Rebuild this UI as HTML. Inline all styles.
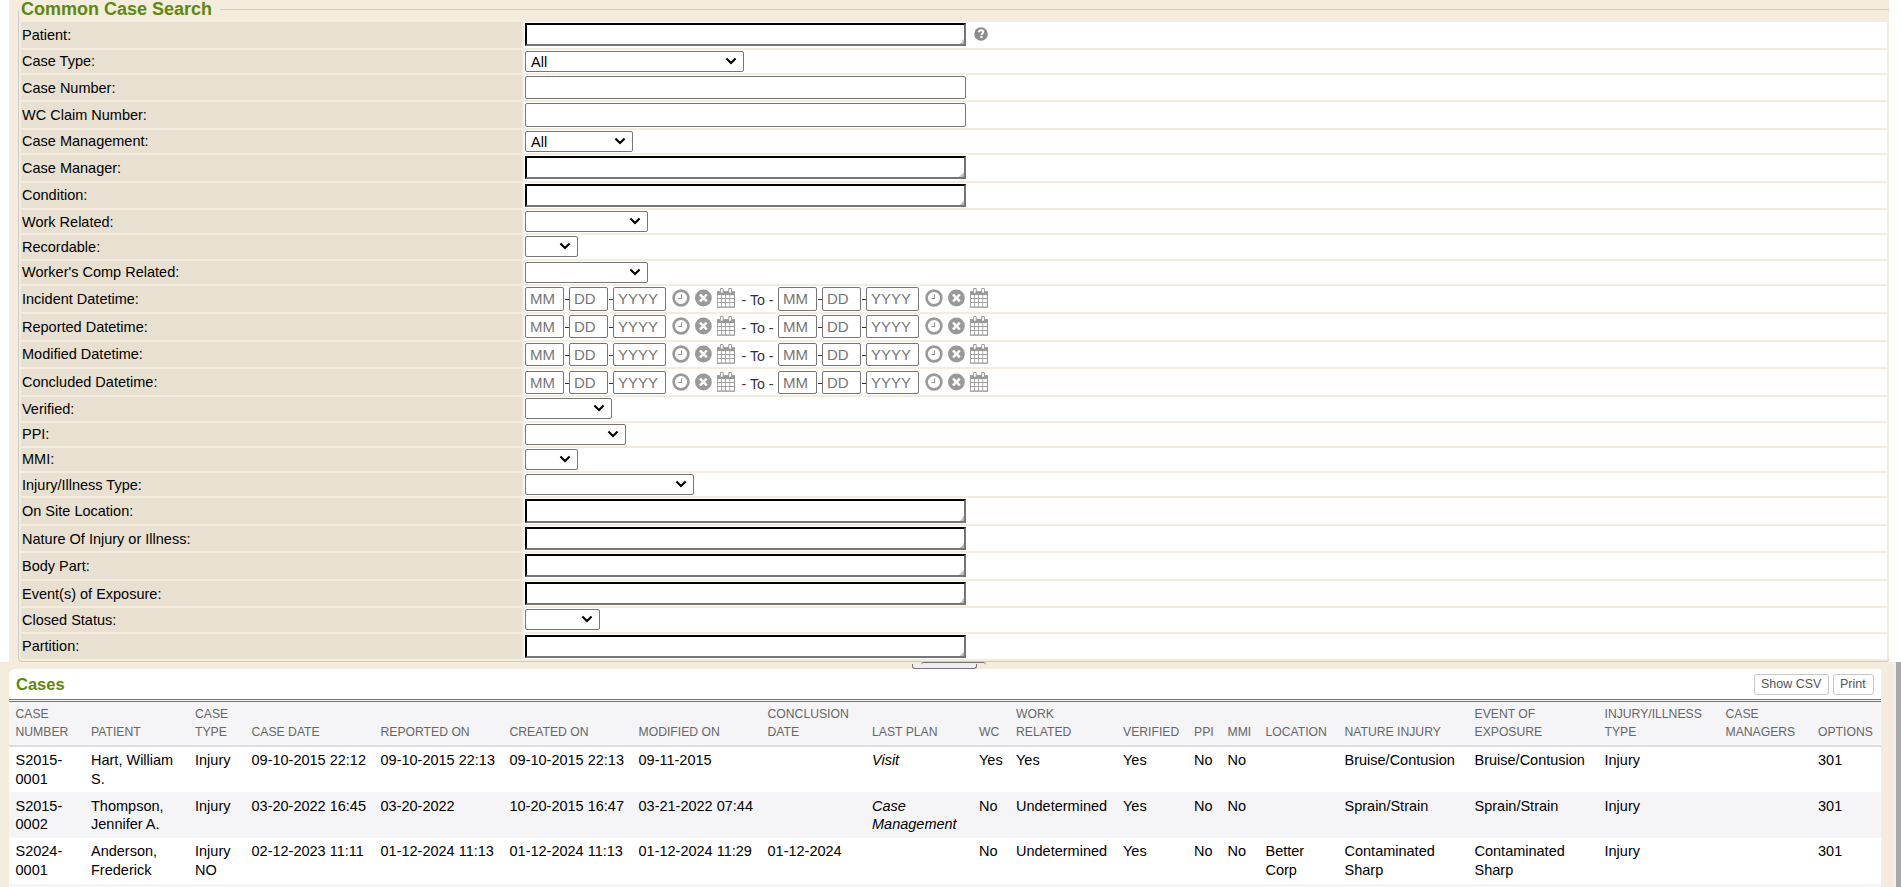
<!DOCTYPE html>
<html><head><meta charset="utf-8"><title>Common Case Search</title>
<style>
*{box-sizing:border-box}
html,body{margin:0;padding:0;width:1901px;height:887px;overflow:hidden;background:#fff;font-family:"Liberation Sans", sans-serif;}
.a{position:absolute}
.lbl{position:absolute;left:21px;width:501px;background:#e8e1d2;font-size:14.5px;color:#000;padding-left:1px;white-space:nowrap}
.dat{position:absolute;left:524px;width:1363px;background:#fff}
.ta{position:absolute;left:525px;width:441px;border-style:solid;border-width:2px;border-color:#000 #767676 #767676 #000;background:#fff}
.ta:after{content:"";position:absolute;right:0;bottom:0;width:5px;height:5px;background:linear-gradient(135deg,transparent 50%,#d4d4d4 50%,#a8a8a8 100%)}
.inp{position:absolute;border:1px solid #767676;border-radius:2px;background:#fff}
.sel{position:absolute;left:525px;height:21px;border:1px solid #767676;border-radius:2px;background:#fff;font-size:14.5px;color:#000}
.sel svg{position:absolute;top:5px}
.ph{position:absolute;font-size:15px;color:#757575;white-space:nowrap}
.dash{position:absolute;width:4px;height:1px;background:#333}
.txt{position:absolute;white-space:nowrap}
.th{position:absolute;font-size:12.2px;color:#666;line-height:18px;white-space:nowrap}
.td{position:absolute;font-size:14.5px;color:#000;line-height:18.7px;white-space:nowrap}
</style></head><body>

<div class="a" style="left:9px;top:0;width:1880px;height:662px;background:#f4ecdc"></div>
<div class="a" style="left:0;top:662px;width:1894px;height:225px;background:#f4ecdc"></div>
<div class="a" style="left:1894px;top:662px;width:2px;height:225px;background:#f0f0f0"></div>
<div class="a" style="left:1896px;top:662px;width:5px;height:225px;background:#a8a8a8"></div>
<div class="a" style="left:18px;top:9px;width:1871px;height:653px;border:1px solid #cbcbcb;border-right:none;border-radius:4px 0 4px 4px"></div>
<div class="a" style="left:1886px;top:9px;width:3px;height:653px;border-top:1px solid #cbcbcb;border-bottom:1px solid #cbcbcb;border-radius:0 3px 3px 0"></div>
<div class="a" style="left:19px;top:0;width:201px;height:20px;background:#f4ecdc"></div>
<div class="txt" style="left:21px;top:-1px;font-size:18px;font-weight:bold;color:#5b8a0c;line-height:20px">Common Case Search</div>
<div class="lbl" style="top:22px;height:26px;line-height:26px"><span style="position:relative;top:0px">Patient:</span></div>
<div class="dat" style="top:22px;height:26px"></div>
<div class="ta" style="top:23px;height:23px"></div>
<svg class="a" style="left:974px;top:27px" width="14" height="14" viewBox="0 0 14 14"><circle cx="7" cy="7" r="6.8" fill="#8c8c8c"/><path d="M4.9 5.3 C4.9 3.9 5.9 3.2 7.1 3.2 C8.4 3.2 9.3 4 9.3 5.1 C9.3 6.5 7.6 6.6 7.6 7.9" fill="none" stroke="#fff" stroke-width="1.9"/><rect x="6.3" y="9" width="2.2" height="2" fill="#fff"/></svg>
<div class="lbl" style="top:50px;height:23px;line-height:23px"><span style="position:relative;top:0px">Case Type:</span></div>
<div class="dat" style="top:50px;height:23px"></div>
<div class="sel" style="top:51px;width:219px"><span class="txt" style="left:5px;top:1px;line-height:18px">All</span><svg style="left:199px" width="12" height="8" viewBox="0 0 12 8"><path d="M1.4 1.6 L6 6 L10.6 1.6" fill="none" stroke="#000" stroke-width="2.1"/></svg></div>
<div class="lbl" style="top:75px;height:25px;line-height:25px"><span style="position:relative;top:1px">Case Number:</span></div>
<div class="dat" style="top:75px;height:25px"></div>
<div class="inp" style="left:525px;top:76px;width:441px;height:23px"></div>
<div class="lbl" style="top:102px;height:26px;line-height:26px"><span style="position:relative;top:0px">WC Claim Number:</span></div>
<div class="dat" style="top:102px;height:26px"></div>
<div class="inp" style="left:525px;top:103px;width:441px;height:24px"></div>
<div class="lbl" style="top:130px;height:23px;line-height:23px"><span style="position:relative;top:0px">Case Management:</span></div>
<div class="dat" style="top:130px;height:23px"></div>
<div class="sel" style="top:131px;width:108px"><span class="txt" style="left:5px;top:1px;line-height:18px">All</span><svg style="left:88px" width="12" height="8" viewBox="0 0 12 8"><path d="M1.4 1.6 L6 6 L10.6 1.6" fill="none" stroke="#000" stroke-width="2.1"/></svg></div>
<div class="lbl" style="top:155px;height:26px;line-height:26px"><span style="position:relative;top:0px">Case Manager:</span></div>
<div class="dat" style="top:155px;height:26px"></div>
<div class="ta" style="top:156px;height:23px"></div>
<div class="lbl" style="top:183px;height:25px;line-height:25px"><span style="position:relative;top:0px">Condition:</span></div>
<div class="dat" style="top:183px;height:25px"></div>
<div class="ta" style="top:184px;height:23px"></div>
<div class="lbl" style="top:210px;height:23px;line-height:23px"><span style="position:relative;top:1px">Work Related:</span></div>
<div class="dat" style="top:210px;height:23px"></div>
<div class="sel" style="top:211px;width:123px"><span class="txt" style="left:5px;top:1px;line-height:18px"></span><svg style="left:103px" width="12" height="8" viewBox="0 0 12 8"><path d="M1.4 1.6 L6 6 L10.6 1.6" fill="none" stroke="#000" stroke-width="2.1"/></svg></div>
<div class="lbl" style="top:235px;height:24px;line-height:24px"><span style="position:relative;top:0px">Recordable:</span></div>
<div class="dat" style="top:235px;height:24px"></div>
<div class="sel" style="top:236px;width:53px"><span class="txt" style="left:5px;top:1px;line-height:18px"></span><svg style="left:33px" width="12" height="8" viewBox="0 0 12 8"><path d="M1.4 1.6 L6 6 L10.6 1.6" fill="none" stroke="#000" stroke-width="2.1"/></svg></div>
<div class="lbl" style="top:261px;height:23px;line-height:23px"><span style="position:relative;top:0px">Worker's Comp Related:</span></div>
<div class="dat" style="top:261px;height:23px"></div>
<div class="sel" style="top:262px;width:123px"><span class="txt" style="left:5px;top:1px;line-height:18px"></span><svg style="left:103px" width="12" height="8" viewBox="0 0 12 8"><path d="M1.4 1.6 L6 6 L10.6 1.6" fill="none" stroke="#000" stroke-width="2.1"/></svg></div>
<div class="lbl" style="top:286px;height:26px;line-height:26px"><span style="position:relative;top:0px">Incident Datetime:</span></div>
<div class="dat" style="top:286px;height:26px"></div>
<div class="inp" style="left:525px;top:287px;width:39px;height:24px"></div>
<div class="ph" style="left:530px;top:290px;line-height:18px">MM</div>
<div class="dash" style="left:565px;top:299px"></div>
<div class="inp" style="left:569px;top:287px;width:39px;height:24px"></div>
<div class="ph" style="left:574px;top:290px;line-height:18px">DD</div>
<div class="dash" style="left:609px;top:299px"></div>
<div class="inp" style="left:613px;top:287px;width:53px;height:24px"></div>
<div class="ph" style="left:618px;top:290px;line-height:18px">YYYY</div>
<svg class="a" style="left:672px;top:289px" width="18" height="18" viewBox="0 0 18 18"><circle cx="9" cy="9" r="7.4" fill="none" stroke="#999" stroke-width="2.6"/><path d="M9.5 5.3 V9.5 H6.4" fill="none" stroke="#999" stroke-width="1.1"/></svg>
<svg class="a" style="left:694px;top:289px" width="18" height="18" viewBox="0 0 18 18"><circle cx="9.4" cy="9" r="8.4" fill="#999"/><path d="M6 5.6 L12.8 12.4 M12.8 5.6 L6 12.4" stroke="#fff" stroke-width="2.6"/></svg>
<svg class="a" style="left:717px;top:288px" width="18" height="20" viewBox="0 0 18 20"><rect x="0" y="3.1" width="18" height="16.7" fill="#999"/><rect x="0.85" y="7.1" width="3.2" height="3.0" fill="#fff"/><rect x="4.85" y="7.1" width="3.35" height="3.0" fill="#fff"/><rect x="9.0" y="7.1" width="3.4" height="3.0" fill="#fff"/><rect x="13.15" y="7.1" width="3.75" height="3.0" fill="#fff"/><rect x="0.85" y="11.1" width="3.2" height="3.0" fill="#fff"/><rect x="4.85" y="11.1" width="3.35" height="3.0" fill="#fff"/><rect x="9.0" y="11.1" width="3.4" height="3.0" fill="#fff"/><rect x="13.15" y="11.1" width="3.75" height="3.0" fill="#fff"/><rect x="0.85" y="15.0" width="3.2" height="3.5" fill="#fff"/><rect x="4.85" y="15.0" width="3.35" height="3.5" fill="#fff"/><rect x="9.0" y="15.0" width="3.4" height="3.5" fill="#fff"/><rect x="13.15" y="15.0" width="3.75" height="3.5" fill="#fff"/><rect x="2.9" y="0" width="3.8" height="5.3" rx="1.4" fill="#999"/><rect x="3.8499999999999996" y="1.1" width="1.9" height="3.6" fill="#fff"/><rect x="11.2" y="0" width="3.8" height="5.3" rx="1.4" fill="#999"/><rect x="12.149999999999999" y="1.1" width="1.9" height="3.6" fill="#fff"/></svg>
<div class="inp" style="left:778px;top:287px;width:39px;height:24px"></div>
<div class="ph" style="left:783px;top:290px;line-height:18px">MM</div>
<div class="dash" style="left:818px;top:299px"></div>
<div class="inp" style="left:822px;top:287px;width:39px;height:24px"></div>
<div class="ph" style="left:827px;top:290px;line-height:18px">DD</div>
<div class="dash" style="left:862px;top:299px"></div>
<div class="inp" style="left:866px;top:287px;width:53px;height:24px"></div>
<div class="ph" style="left:871px;top:290px;line-height:18px">YYYY</div>
<svg class="a" style="left:925px;top:289px" width="18" height="18" viewBox="0 0 18 18"><circle cx="9" cy="9" r="7.4" fill="none" stroke="#999" stroke-width="2.6"/><path d="M9.5 5.3 V9.5 H6.4" fill="none" stroke="#999" stroke-width="1.1"/></svg>
<svg class="a" style="left:947px;top:289px" width="18" height="18" viewBox="0 0 18 18"><circle cx="9.4" cy="9" r="8.4" fill="#999"/><path d="M6 5.6 L12.8 12.4 M12.8 5.6 L6 12.4" stroke="#fff" stroke-width="2.6"/></svg>
<svg class="a" style="left:970px;top:288px" width="18" height="20" viewBox="0 0 18 20"><rect x="0" y="3.1" width="18" height="16.7" fill="#999"/><rect x="0.85" y="7.1" width="3.2" height="3.0" fill="#fff"/><rect x="4.85" y="7.1" width="3.35" height="3.0" fill="#fff"/><rect x="9.0" y="7.1" width="3.4" height="3.0" fill="#fff"/><rect x="13.15" y="7.1" width="3.75" height="3.0" fill="#fff"/><rect x="0.85" y="11.1" width="3.2" height="3.0" fill="#fff"/><rect x="4.85" y="11.1" width="3.35" height="3.0" fill="#fff"/><rect x="9.0" y="11.1" width="3.4" height="3.0" fill="#fff"/><rect x="13.15" y="11.1" width="3.75" height="3.0" fill="#fff"/><rect x="0.85" y="15.0" width="3.2" height="3.5" fill="#fff"/><rect x="4.85" y="15.0" width="3.35" height="3.5" fill="#fff"/><rect x="9.0" y="15.0" width="3.4" height="3.5" fill="#fff"/><rect x="13.15" y="15.0" width="3.75" height="3.5" fill="#fff"/><rect x="2.9" y="0" width="3.8" height="5.3" rx="1.4" fill="#999"/><rect x="3.8499999999999996" y="1.1" width="1.9" height="3.6" fill="#fff"/><rect x="11.2" y="0" width="3.8" height="5.3" rx="1.4" fill="#999"/><rect x="12.149999999999999" y="1.1" width="1.9" height="3.6" fill="#fff"/></svg>
<div class="txt" style="left:741.5px;top:290.6px;font-size:14.2px;line-height:18px;color:#333;transform:scaleY(1.06);transform-origin:0 14px">- To -</div>
<div class="lbl" style="top:314px;height:26px;line-height:26px"><span style="position:relative;top:0px">Reported Datetime:</span></div>
<div class="dat" style="top:314px;height:26px"></div>
<div class="inp" style="left:525px;top:315px;width:39px;height:23px"></div>
<div class="ph" style="left:530px;top:318px;line-height:18px">MM</div>
<div class="dash" style="left:565px;top:327px"></div>
<div class="inp" style="left:569px;top:315px;width:39px;height:23px"></div>
<div class="ph" style="left:574px;top:318px;line-height:18px">DD</div>
<div class="dash" style="left:609px;top:327px"></div>
<div class="inp" style="left:613px;top:315px;width:53px;height:23px"></div>
<div class="ph" style="left:618px;top:318px;line-height:18px">YYYY</div>
<svg class="a" style="left:672px;top:317px" width="18" height="18" viewBox="0 0 18 18"><circle cx="9" cy="9" r="7.4" fill="none" stroke="#999" stroke-width="2.6"/><path d="M9.5 5.3 V9.5 H6.4" fill="none" stroke="#999" stroke-width="1.1"/></svg>
<svg class="a" style="left:694px;top:317px" width="18" height="18" viewBox="0 0 18 18"><circle cx="9.4" cy="9" r="8.4" fill="#999"/><path d="M6 5.6 L12.8 12.4 M12.8 5.6 L6 12.4" stroke="#fff" stroke-width="2.6"/></svg>
<svg class="a" style="left:717px;top:316px" width="18" height="20" viewBox="0 0 18 20"><rect x="0" y="3.1" width="18" height="16.7" fill="#999"/><rect x="0.85" y="7.1" width="3.2" height="3.0" fill="#fff"/><rect x="4.85" y="7.1" width="3.35" height="3.0" fill="#fff"/><rect x="9.0" y="7.1" width="3.4" height="3.0" fill="#fff"/><rect x="13.15" y="7.1" width="3.75" height="3.0" fill="#fff"/><rect x="0.85" y="11.1" width="3.2" height="3.0" fill="#fff"/><rect x="4.85" y="11.1" width="3.35" height="3.0" fill="#fff"/><rect x="9.0" y="11.1" width="3.4" height="3.0" fill="#fff"/><rect x="13.15" y="11.1" width="3.75" height="3.0" fill="#fff"/><rect x="0.85" y="15.0" width="3.2" height="3.5" fill="#fff"/><rect x="4.85" y="15.0" width="3.35" height="3.5" fill="#fff"/><rect x="9.0" y="15.0" width="3.4" height="3.5" fill="#fff"/><rect x="13.15" y="15.0" width="3.75" height="3.5" fill="#fff"/><rect x="2.9" y="0" width="3.8" height="5.3" rx="1.4" fill="#999"/><rect x="3.8499999999999996" y="1.1" width="1.9" height="3.6" fill="#fff"/><rect x="11.2" y="0" width="3.8" height="5.3" rx="1.4" fill="#999"/><rect x="12.149999999999999" y="1.1" width="1.9" height="3.6" fill="#fff"/></svg>
<div class="inp" style="left:778px;top:315px;width:39px;height:23px"></div>
<div class="ph" style="left:783px;top:318px;line-height:18px">MM</div>
<div class="dash" style="left:818px;top:327px"></div>
<div class="inp" style="left:822px;top:315px;width:39px;height:23px"></div>
<div class="ph" style="left:827px;top:318px;line-height:18px">DD</div>
<div class="dash" style="left:862px;top:327px"></div>
<div class="inp" style="left:866px;top:315px;width:53px;height:23px"></div>
<div class="ph" style="left:871px;top:318px;line-height:18px">YYYY</div>
<svg class="a" style="left:925px;top:317px" width="18" height="18" viewBox="0 0 18 18"><circle cx="9" cy="9" r="7.4" fill="none" stroke="#999" stroke-width="2.6"/><path d="M9.5 5.3 V9.5 H6.4" fill="none" stroke="#999" stroke-width="1.1"/></svg>
<svg class="a" style="left:947px;top:317px" width="18" height="18" viewBox="0 0 18 18"><circle cx="9.4" cy="9" r="8.4" fill="#999"/><path d="M6 5.6 L12.8 12.4 M12.8 5.6 L6 12.4" stroke="#fff" stroke-width="2.6"/></svg>
<svg class="a" style="left:970px;top:316px" width="18" height="20" viewBox="0 0 18 20"><rect x="0" y="3.1" width="18" height="16.7" fill="#999"/><rect x="0.85" y="7.1" width="3.2" height="3.0" fill="#fff"/><rect x="4.85" y="7.1" width="3.35" height="3.0" fill="#fff"/><rect x="9.0" y="7.1" width="3.4" height="3.0" fill="#fff"/><rect x="13.15" y="7.1" width="3.75" height="3.0" fill="#fff"/><rect x="0.85" y="11.1" width="3.2" height="3.0" fill="#fff"/><rect x="4.85" y="11.1" width="3.35" height="3.0" fill="#fff"/><rect x="9.0" y="11.1" width="3.4" height="3.0" fill="#fff"/><rect x="13.15" y="11.1" width="3.75" height="3.0" fill="#fff"/><rect x="0.85" y="15.0" width="3.2" height="3.5" fill="#fff"/><rect x="4.85" y="15.0" width="3.35" height="3.5" fill="#fff"/><rect x="9.0" y="15.0" width="3.4" height="3.5" fill="#fff"/><rect x="13.15" y="15.0" width="3.75" height="3.5" fill="#fff"/><rect x="2.9" y="0" width="3.8" height="5.3" rx="1.4" fill="#999"/><rect x="3.8499999999999996" y="1.1" width="1.9" height="3.6" fill="#fff"/><rect x="11.2" y="0" width="3.8" height="5.3" rx="1.4" fill="#999"/><rect x="12.149999999999999" y="1.1" width="1.9" height="3.6" fill="#fff"/></svg>
<div class="txt" style="left:741.5px;top:318.6px;font-size:14.2px;line-height:18px;color:#333;transform:scaleY(1.06);transform-origin:0 14px">- To -</div>
<div class="lbl" style="top:342px;height:25px;line-height:25px"><span style="position:relative;top:0px">Modified Datetime:</span></div>
<div class="dat" style="top:342px;height:25px"></div>
<div class="inp" style="left:525px;top:343px;width:39px;height:23px"></div>
<div class="ph" style="left:530px;top:346px;line-height:18px">MM</div>
<div class="dash" style="left:565px;top:355px"></div>
<div class="inp" style="left:569px;top:343px;width:39px;height:23px"></div>
<div class="ph" style="left:574px;top:346px;line-height:18px">DD</div>
<div class="dash" style="left:609px;top:355px"></div>
<div class="inp" style="left:613px;top:343px;width:53px;height:23px"></div>
<div class="ph" style="left:618px;top:346px;line-height:18px">YYYY</div>
<svg class="a" style="left:672px;top:345px" width="18" height="18" viewBox="0 0 18 18"><circle cx="9" cy="9" r="7.4" fill="none" stroke="#999" stroke-width="2.6"/><path d="M9.5 5.3 V9.5 H6.4" fill="none" stroke="#999" stroke-width="1.1"/></svg>
<svg class="a" style="left:694px;top:345px" width="18" height="18" viewBox="0 0 18 18"><circle cx="9.4" cy="9" r="8.4" fill="#999"/><path d="M6 5.6 L12.8 12.4 M12.8 5.6 L6 12.4" stroke="#fff" stroke-width="2.6"/></svg>
<svg class="a" style="left:717px;top:344px" width="18" height="20" viewBox="0 0 18 20"><rect x="0" y="3.1" width="18" height="16.7" fill="#999"/><rect x="0.85" y="7.1" width="3.2" height="3.0" fill="#fff"/><rect x="4.85" y="7.1" width="3.35" height="3.0" fill="#fff"/><rect x="9.0" y="7.1" width="3.4" height="3.0" fill="#fff"/><rect x="13.15" y="7.1" width="3.75" height="3.0" fill="#fff"/><rect x="0.85" y="11.1" width="3.2" height="3.0" fill="#fff"/><rect x="4.85" y="11.1" width="3.35" height="3.0" fill="#fff"/><rect x="9.0" y="11.1" width="3.4" height="3.0" fill="#fff"/><rect x="13.15" y="11.1" width="3.75" height="3.0" fill="#fff"/><rect x="0.85" y="15.0" width="3.2" height="3.5" fill="#fff"/><rect x="4.85" y="15.0" width="3.35" height="3.5" fill="#fff"/><rect x="9.0" y="15.0" width="3.4" height="3.5" fill="#fff"/><rect x="13.15" y="15.0" width="3.75" height="3.5" fill="#fff"/><rect x="2.9" y="0" width="3.8" height="5.3" rx="1.4" fill="#999"/><rect x="3.8499999999999996" y="1.1" width="1.9" height="3.6" fill="#fff"/><rect x="11.2" y="0" width="3.8" height="5.3" rx="1.4" fill="#999"/><rect x="12.149999999999999" y="1.1" width="1.9" height="3.6" fill="#fff"/></svg>
<div class="inp" style="left:778px;top:343px;width:39px;height:23px"></div>
<div class="ph" style="left:783px;top:346px;line-height:18px">MM</div>
<div class="dash" style="left:818px;top:355px"></div>
<div class="inp" style="left:822px;top:343px;width:39px;height:23px"></div>
<div class="ph" style="left:827px;top:346px;line-height:18px">DD</div>
<div class="dash" style="left:862px;top:355px"></div>
<div class="inp" style="left:866px;top:343px;width:53px;height:23px"></div>
<div class="ph" style="left:871px;top:346px;line-height:18px">YYYY</div>
<svg class="a" style="left:925px;top:345px" width="18" height="18" viewBox="0 0 18 18"><circle cx="9" cy="9" r="7.4" fill="none" stroke="#999" stroke-width="2.6"/><path d="M9.5 5.3 V9.5 H6.4" fill="none" stroke="#999" stroke-width="1.1"/></svg>
<svg class="a" style="left:947px;top:345px" width="18" height="18" viewBox="0 0 18 18"><circle cx="9.4" cy="9" r="8.4" fill="#999"/><path d="M6 5.6 L12.8 12.4 M12.8 5.6 L6 12.4" stroke="#fff" stroke-width="2.6"/></svg>
<svg class="a" style="left:970px;top:344px" width="18" height="20" viewBox="0 0 18 20"><rect x="0" y="3.1" width="18" height="16.7" fill="#999"/><rect x="0.85" y="7.1" width="3.2" height="3.0" fill="#fff"/><rect x="4.85" y="7.1" width="3.35" height="3.0" fill="#fff"/><rect x="9.0" y="7.1" width="3.4" height="3.0" fill="#fff"/><rect x="13.15" y="7.1" width="3.75" height="3.0" fill="#fff"/><rect x="0.85" y="11.1" width="3.2" height="3.0" fill="#fff"/><rect x="4.85" y="11.1" width="3.35" height="3.0" fill="#fff"/><rect x="9.0" y="11.1" width="3.4" height="3.0" fill="#fff"/><rect x="13.15" y="11.1" width="3.75" height="3.0" fill="#fff"/><rect x="0.85" y="15.0" width="3.2" height="3.5" fill="#fff"/><rect x="4.85" y="15.0" width="3.35" height="3.5" fill="#fff"/><rect x="9.0" y="15.0" width="3.4" height="3.5" fill="#fff"/><rect x="13.15" y="15.0" width="3.75" height="3.5" fill="#fff"/><rect x="2.9" y="0" width="3.8" height="5.3" rx="1.4" fill="#999"/><rect x="3.8499999999999996" y="1.1" width="1.9" height="3.6" fill="#fff"/><rect x="11.2" y="0" width="3.8" height="5.3" rx="1.4" fill="#999"/><rect x="12.149999999999999" y="1.1" width="1.9" height="3.6" fill="#fff"/></svg>
<div class="txt" style="left:741.5px;top:346.6px;font-size:14.2px;line-height:18px;color:#333;transform:scaleY(1.06);transform-origin:0 14px">- To -</div>
<div class="lbl" style="top:369px;height:26px;line-height:26px"><span style="position:relative;top:0px">Concluded Datetime:</span></div>
<div class="dat" style="top:369px;height:26px"></div>
<div class="inp" style="left:525px;top:371px;width:39px;height:23px"></div>
<div class="ph" style="left:530px;top:374px;line-height:18px">MM</div>
<div class="dash" style="left:565px;top:383px"></div>
<div class="inp" style="left:569px;top:371px;width:39px;height:23px"></div>
<div class="ph" style="left:574px;top:374px;line-height:18px">DD</div>
<div class="dash" style="left:609px;top:383px"></div>
<div class="inp" style="left:613px;top:371px;width:53px;height:23px"></div>
<div class="ph" style="left:618px;top:374px;line-height:18px">YYYY</div>
<svg class="a" style="left:672px;top:373px" width="18" height="18" viewBox="0 0 18 18"><circle cx="9" cy="9" r="7.4" fill="none" stroke="#999" stroke-width="2.6"/><path d="M9.5 5.3 V9.5 H6.4" fill="none" stroke="#999" stroke-width="1.1"/></svg>
<svg class="a" style="left:694px;top:373px" width="18" height="18" viewBox="0 0 18 18"><circle cx="9.4" cy="9" r="8.4" fill="#999"/><path d="M6 5.6 L12.8 12.4 M12.8 5.6 L6 12.4" stroke="#fff" stroke-width="2.6"/></svg>
<svg class="a" style="left:717px;top:372px" width="18" height="20" viewBox="0 0 18 20"><rect x="0" y="3.1" width="18" height="16.7" fill="#999"/><rect x="0.85" y="7.1" width="3.2" height="3.0" fill="#fff"/><rect x="4.85" y="7.1" width="3.35" height="3.0" fill="#fff"/><rect x="9.0" y="7.1" width="3.4" height="3.0" fill="#fff"/><rect x="13.15" y="7.1" width="3.75" height="3.0" fill="#fff"/><rect x="0.85" y="11.1" width="3.2" height="3.0" fill="#fff"/><rect x="4.85" y="11.1" width="3.35" height="3.0" fill="#fff"/><rect x="9.0" y="11.1" width="3.4" height="3.0" fill="#fff"/><rect x="13.15" y="11.1" width="3.75" height="3.0" fill="#fff"/><rect x="0.85" y="15.0" width="3.2" height="3.5" fill="#fff"/><rect x="4.85" y="15.0" width="3.35" height="3.5" fill="#fff"/><rect x="9.0" y="15.0" width="3.4" height="3.5" fill="#fff"/><rect x="13.15" y="15.0" width="3.75" height="3.5" fill="#fff"/><rect x="2.9" y="0" width="3.8" height="5.3" rx="1.4" fill="#999"/><rect x="3.8499999999999996" y="1.1" width="1.9" height="3.6" fill="#fff"/><rect x="11.2" y="0" width="3.8" height="5.3" rx="1.4" fill="#999"/><rect x="12.149999999999999" y="1.1" width="1.9" height="3.6" fill="#fff"/></svg>
<div class="inp" style="left:778px;top:371px;width:39px;height:23px"></div>
<div class="ph" style="left:783px;top:374px;line-height:18px">MM</div>
<div class="dash" style="left:818px;top:383px"></div>
<div class="inp" style="left:822px;top:371px;width:39px;height:23px"></div>
<div class="ph" style="left:827px;top:374px;line-height:18px">DD</div>
<div class="dash" style="left:862px;top:383px"></div>
<div class="inp" style="left:866px;top:371px;width:53px;height:23px"></div>
<div class="ph" style="left:871px;top:374px;line-height:18px">YYYY</div>
<svg class="a" style="left:925px;top:373px" width="18" height="18" viewBox="0 0 18 18"><circle cx="9" cy="9" r="7.4" fill="none" stroke="#999" stroke-width="2.6"/><path d="M9.5 5.3 V9.5 H6.4" fill="none" stroke="#999" stroke-width="1.1"/></svg>
<svg class="a" style="left:947px;top:373px" width="18" height="18" viewBox="0 0 18 18"><circle cx="9.4" cy="9" r="8.4" fill="#999"/><path d="M6 5.6 L12.8 12.4 M12.8 5.6 L6 12.4" stroke="#fff" stroke-width="2.6"/></svg>
<svg class="a" style="left:970px;top:372px" width="18" height="20" viewBox="0 0 18 20"><rect x="0" y="3.1" width="18" height="16.7" fill="#999"/><rect x="0.85" y="7.1" width="3.2" height="3.0" fill="#fff"/><rect x="4.85" y="7.1" width="3.35" height="3.0" fill="#fff"/><rect x="9.0" y="7.1" width="3.4" height="3.0" fill="#fff"/><rect x="13.15" y="7.1" width="3.75" height="3.0" fill="#fff"/><rect x="0.85" y="11.1" width="3.2" height="3.0" fill="#fff"/><rect x="4.85" y="11.1" width="3.35" height="3.0" fill="#fff"/><rect x="9.0" y="11.1" width="3.4" height="3.0" fill="#fff"/><rect x="13.15" y="11.1" width="3.75" height="3.0" fill="#fff"/><rect x="0.85" y="15.0" width="3.2" height="3.5" fill="#fff"/><rect x="4.85" y="15.0" width="3.35" height="3.5" fill="#fff"/><rect x="9.0" y="15.0" width="3.4" height="3.5" fill="#fff"/><rect x="13.15" y="15.0" width="3.75" height="3.5" fill="#fff"/><rect x="2.9" y="0" width="3.8" height="5.3" rx="1.4" fill="#999"/><rect x="3.8499999999999996" y="1.1" width="1.9" height="3.6" fill="#fff"/><rect x="11.2" y="0" width="3.8" height="5.3" rx="1.4" fill="#999"/><rect x="12.149999999999999" y="1.1" width="1.9" height="3.6" fill="#fff"/></svg>
<div class="txt" style="left:741.5px;top:374.6px;font-size:14.2px;line-height:18px;color:#333;transform:scaleY(1.06);transform-origin:0 14px">- To -</div>
<div class="lbl" style="top:397px;height:24px;line-height:24px"><span style="position:relative;top:0px">Verified:</span></div>
<div class="dat" style="top:397px;height:24px"></div>
<div class="sel" style="top:398px;width:87px"><span class="txt" style="left:5px;top:1px;line-height:18px"></span><svg style="left:67px" width="12" height="8" viewBox="0 0 12 8"><path d="M1.4 1.6 L6 6 L10.6 1.6" fill="none" stroke="#000" stroke-width="2.1"/></svg></div>
<div class="lbl" style="top:423px;height:23px;line-height:23px"><span style="position:relative;top:0px">PPI:</span></div>
<div class="dat" style="top:423px;height:23px"></div>
<div class="sel" style="top:424px;width:101px"><span class="txt" style="left:5px;top:1px;line-height:18px"></span><svg style="left:81px" width="12" height="8" viewBox="0 0 12 8"><path d="M1.4 1.6 L6 6 L10.6 1.6" fill="none" stroke="#000" stroke-width="2.1"/></svg></div>
<div class="lbl" style="top:448px;height:23px;line-height:23px"><span style="position:relative;top:0px">MMI:</span></div>
<div class="dat" style="top:448px;height:23px"></div>
<div class="sel" style="top:449px;width:53px"><span class="txt" style="left:5px;top:1px;line-height:18px"></span><svg style="left:33px" width="12" height="8" viewBox="0 0 12 8"><path d="M1.4 1.6 L6 6 L10.6 1.6" fill="none" stroke="#000" stroke-width="2.1"/></svg></div>
<div class="lbl" style="top:473px;height:23px;line-height:23px"><span style="position:relative;top:0.5px">Injury/Illness Type:</span></div>
<div class="dat" style="top:473px;height:23px"></div>
<div class="sel" style="top:474px;width:169px"><span class="txt" style="left:5px;top:1px;line-height:18px"></span><svg style="left:149px" width="12" height="8" viewBox="0 0 12 8"><path d="M1.4 1.6 L6 6 L10.6 1.6" fill="none" stroke="#000" stroke-width="2.1"/></svg></div>
<div class="lbl" style="top:498px;height:26px;line-height:26px"><span style="position:relative;top:0px">On Site Location:</span></div>
<div class="dat" style="top:498px;height:26px"></div>
<div class="ta" style="top:499px;height:24px"></div>
<div class="lbl" style="top:526px;height:25px;line-height:25px"><span style="position:relative;top:0.6px">Nature Of Injury or Illness:</span></div>
<div class="dat" style="top:526px;height:25px"></div>
<div class="ta" style="top:527px;height:23px"></div>
<div class="lbl" style="top:553px;height:26px;line-height:26px"><span style="position:relative;top:0px">Body Part:</span></div>
<div class="dat" style="top:553px;height:26px"></div>
<div class="ta" style="top:554px;height:23px"></div>
<div class="lbl" style="top:581px;height:25px;line-height:25px"><span style="position:relative;top:1px">Event(s) of Exposure:</span></div>
<div class="dat" style="top:581px;height:25px"></div>
<div class="ta" style="top:582px;height:23px"></div>
<div class="lbl" style="top:608px;height:24px;line-height:24px"><span style="position:relative;top:0px">Closed Status:</span></div>
<div class="dat" style="top:608px;height:24px"></div>
<div class="sel" style="top:609px;width:75px"><span class="txt" style="left:5px;top:1px;line-height:18px"></span><svg style="left:55px" width="12" height="8" viewBox="0 0 12 8"><path d="M1.4 1.6 L6 6 L10.6 1.6" fill="none" stroke="#000" stroke-width="2.1"/></svg></div>
<div class="lbl" style="top:634px;height:25px;line-height:25px"><span style="position:relative;top:0px">Partition:</span></div>
<div class="dat" style="top:634px;height:25px"></div>
<div class="ta" style="top:635px;height:23px"></div>
<div class="a" style="left:912px;top:664px;width:65px;height:5px;background:#efefef;border:1px solid #767676;border-top:none;border-radius:0 0 3px 3px"></div>
<div class="a" style="left:921px;top:662px;width:65px;height:3px;border-top:1px solid #767676;border-radius:3px 3px 0 0"></div>
<div class="a" style="left:9px;top:669px;width:1872px;height:230px;background:#fff;border-radius:6px 3px 0 0"></div>
<div class="txt" style="left:16px;top:674px;font-size:16.5px;font-weight:bold;color:#5b8a0c;line-height:20px">Cases</div>
<div class="a" style="left:1754px;top:674px;width:75px;height:21px;border:1px solid #c6c6c6;border-radius:3px;background:#fff"></div>
<div class="txt" style="left:1761px;top:676px;font-size:12.5px;color:#555;line-height:16px">Show CSV</div>
<div class="a" style="left:1833px;top:674px;width:41px;height:21px;border:1px solid #c6c6c6;border-radius:3px;background:#fff"></div>
<div class="txt" style="left:1840px;top:676px;font-size:12.5px;color:#555;line-height:16px">Print</div>
<div class="a" style="left:9px;top:700px;width:1872px;height:45px;background:#f5f5f8"></div>
<div class="a" style="left:9px;top:699px;width:1872px;height:1px;background:#777"></div>
<div class="a" style="left:9px;top:701px;width:1872px;height:1px;background:#777"></div>
<div class="a" style="left:9px;top:745px;width:1872px;height:2px;background:#ddd"></div>
<div class="a" style="left:9px;top:792px;width:1872px;height:46px;background:#f5f5f8"></div>
<div class="a" style="left:9px;top:884px;width:1872px;height:3px;background:#f5f5f8"></div>
<div class="th" style="left:15.5px;top:704.5px">CASE<br>NUMBER</div>
<div class="th" style="left:91px;top:704.5px"><br>PATIENT</div>
<div class="th" style="left:195px;top:704.5px">CASE<br>TYPE</div>
<div class="th" style="left:251.5px;top:704.5px"><br>CASE DATE</div>
<div class="th" style="left:380.5px;top:704.5px"><br>REPORTED ON</div>
<div class="th" style="left:509.5px;top:704.5px"><br>CREATED ON</div>
<div class="th" style="left:638.5px;top:704.5px"><br>MODIFIED ON</div>
<div class="th" style="left:767.5px;top:704.5px">CONCLUSION<br>DATE</div>
<div class="th" style="left:872px;top:704.5px"><br>LAST PLAN</div>
<div class="th" style="left:979px;top:704.5px"><br>WC</div>
<div class="th" style="left:1016px;top:704.5px">WORK<br>RELATED</div>
<div class="th" style="left:1123px;top:704.5px"><br>VERIFIED</div>
<div class="th" style="left:1194px;top:704.5px"><br>PPI</div>
<div class="th" style="left:1227.5px;top:704.5px"><br>MMI</div>
<div class="th" style="left:1265.5px;top:704.5px"><br>LOCATION</div>
<div class="th" style="left:1344.5px;top:704.5px"><br>NATURE INJURY</div>
<div class="th" style="left:1474.5px;top:704.5px">EVENT OF<br>EXPOSURE</div>
<div class="th" style="left:1604.5px;top:704.5px">INJURY/ILLNESS<br>TYPE</div>
<div class="th" style="left:1725.5px;top:704.5px">CASE<br>MANAGERS</div>
<div class="th" style="left:1818px;top:704.5px"><br>OPTIONS</div>
<div class="td" style="left:15.5px;top:751.0px">S2015-<br>0001</div>
<div class="td" style="left:91px;top:751.0px">Hart, William<br>S.</div>
<div class="td" style="left:195px;top:751.0px">Injury</div>
<div class="td" style="left:251.5px;top:751.0px">09-10-2015 22:12</div>
<div class="td" style="left:380.5px;top:751.0px">09-10-2015 22:13</div>
<div class="td" style="left:509.5px;top:751.0px">09-10-2015 22:13</div>
<div class="td" style="left:638.5px;top:751.0px">09-11-2015</div>
<div class="td" style="left:872px;top:751.0px"><i>Visit</i></div>
<div class="td" style="left:979px;top:751.0px">Yes</div>
<div class="td" style="left:1016px;top:751.0px">Yes</div>
<div class="td" style="left:1123px;top:751.0px">Yes</div>
<div class="td" style="left:1194px;top:751.0px">No</div>
<div class="td" style="left:1227.5px;top:751.0px">No</div>
<div class="td" style="left:1344.5px;top:751.0px">Bruise/Contusion</div>
<div class="td" style="left:1474.5px;top:751.0px">Bruise/Contusion</div>
<div class="td" style="left:1604.5px;top:751.0px">Injury</div>
<div class="td" style="left:1818px;top:751.0px">301</div>
<div class="td" style="left:15.5px;top:796.5px">S2015-<br>0002</div>
<div class="td" style="left:91px;top:796.5px">Thompson,<br>Jennifer A.</div>
<div class="td" style="left:195px;top:796.5px">Injury</div>
<div class="td" style="left:251.5px;top:796.5px">03-20-2022 16:45</div>
<div class="td" style="left:380.5px;top:796.5px">03-20-2022</div>
<div class="td" style="left:509.5px;top:796.5px">10-20-2015 16:47</div>
<div class="td" style="left:638.5px;top:796.5px">03-21-2022 07:44</div>
<div class="td" style="left:872px;top:796.5px"><i>Case<br>Management</i></div>
<div class="td" style="left:979px;top:796.5px">No</div>
<div class="td" style="left:1016px;top:796.5px">Undetermined</div>
<div class="td" style="left:1123px;top:796.5px">Yes</div>
<div class="td" style="left:1194px;top:796.5px">No</div>
<div class="td" style="left:1227.5px;top:796.5px">No</div>
<div class="td" style="left:1344.5px;top:796.5px">Sprain/Strain</div>
<div class="td" style="left:1474.5px;top:796.5px">Sprain/Strain</div>
<div class="td" style="left:1604.5px;top:796.5px">Injury</div>
<div class="td" style="left:1818px;top:796.5px">301</div>
<div class="td" style="left:15.5px;top:842.0px">S2024-<br>0001</div>
<div class="td" style="left:91px;top:842.0px">Anderson,<br>Frederick</div>
<div class="td" style="left:195px;top:842.0px">Injury<br>NO</div>
<div class="td" style="left:251.5px;top:842.0px">02-12-2023 11:11</div>
<div class="td" style="left:380.5px;top:842.0px">01-12-2024 11:13</div>
<div class="td" style="left:509.5px;top:842.0px">01-12-2024 11:13</div>
<div class="td" style="left:638.5px;top:842.0px">01-12-2024 11:29</div>
<div class="td" style="left:767.5px;top:842.0px">01-12-2024</div>
<div class="td" style="left:979px;top:842.0px">No</div>
<div class="td" style="left:1016px;top:842.0px">Undetermined</div>
<div class="td" style="left:1123px;top:842.0px">Yes</div>
<div class="td" style="left:1194px;top:842.0px">No</div>
<div class="td" style="left:1227.5px;top:842.0px">No</div>
<div class="td" style="left:1265.5px;top:842.0px">Better<br>Corp</div>
<div class="td" style="left:1344.5px;top:842.0px">Contaminated<br>Sharp</div>
<div class="td" style="left:1474.5px;top:842.0px">Contaminated<br>Sharp</div>
<div class="td" style="left:1604.5px;top:842.0px">Injury</div>
<div class="td" style="left:1818px;top:842.0px">301</div>
</body></html>
